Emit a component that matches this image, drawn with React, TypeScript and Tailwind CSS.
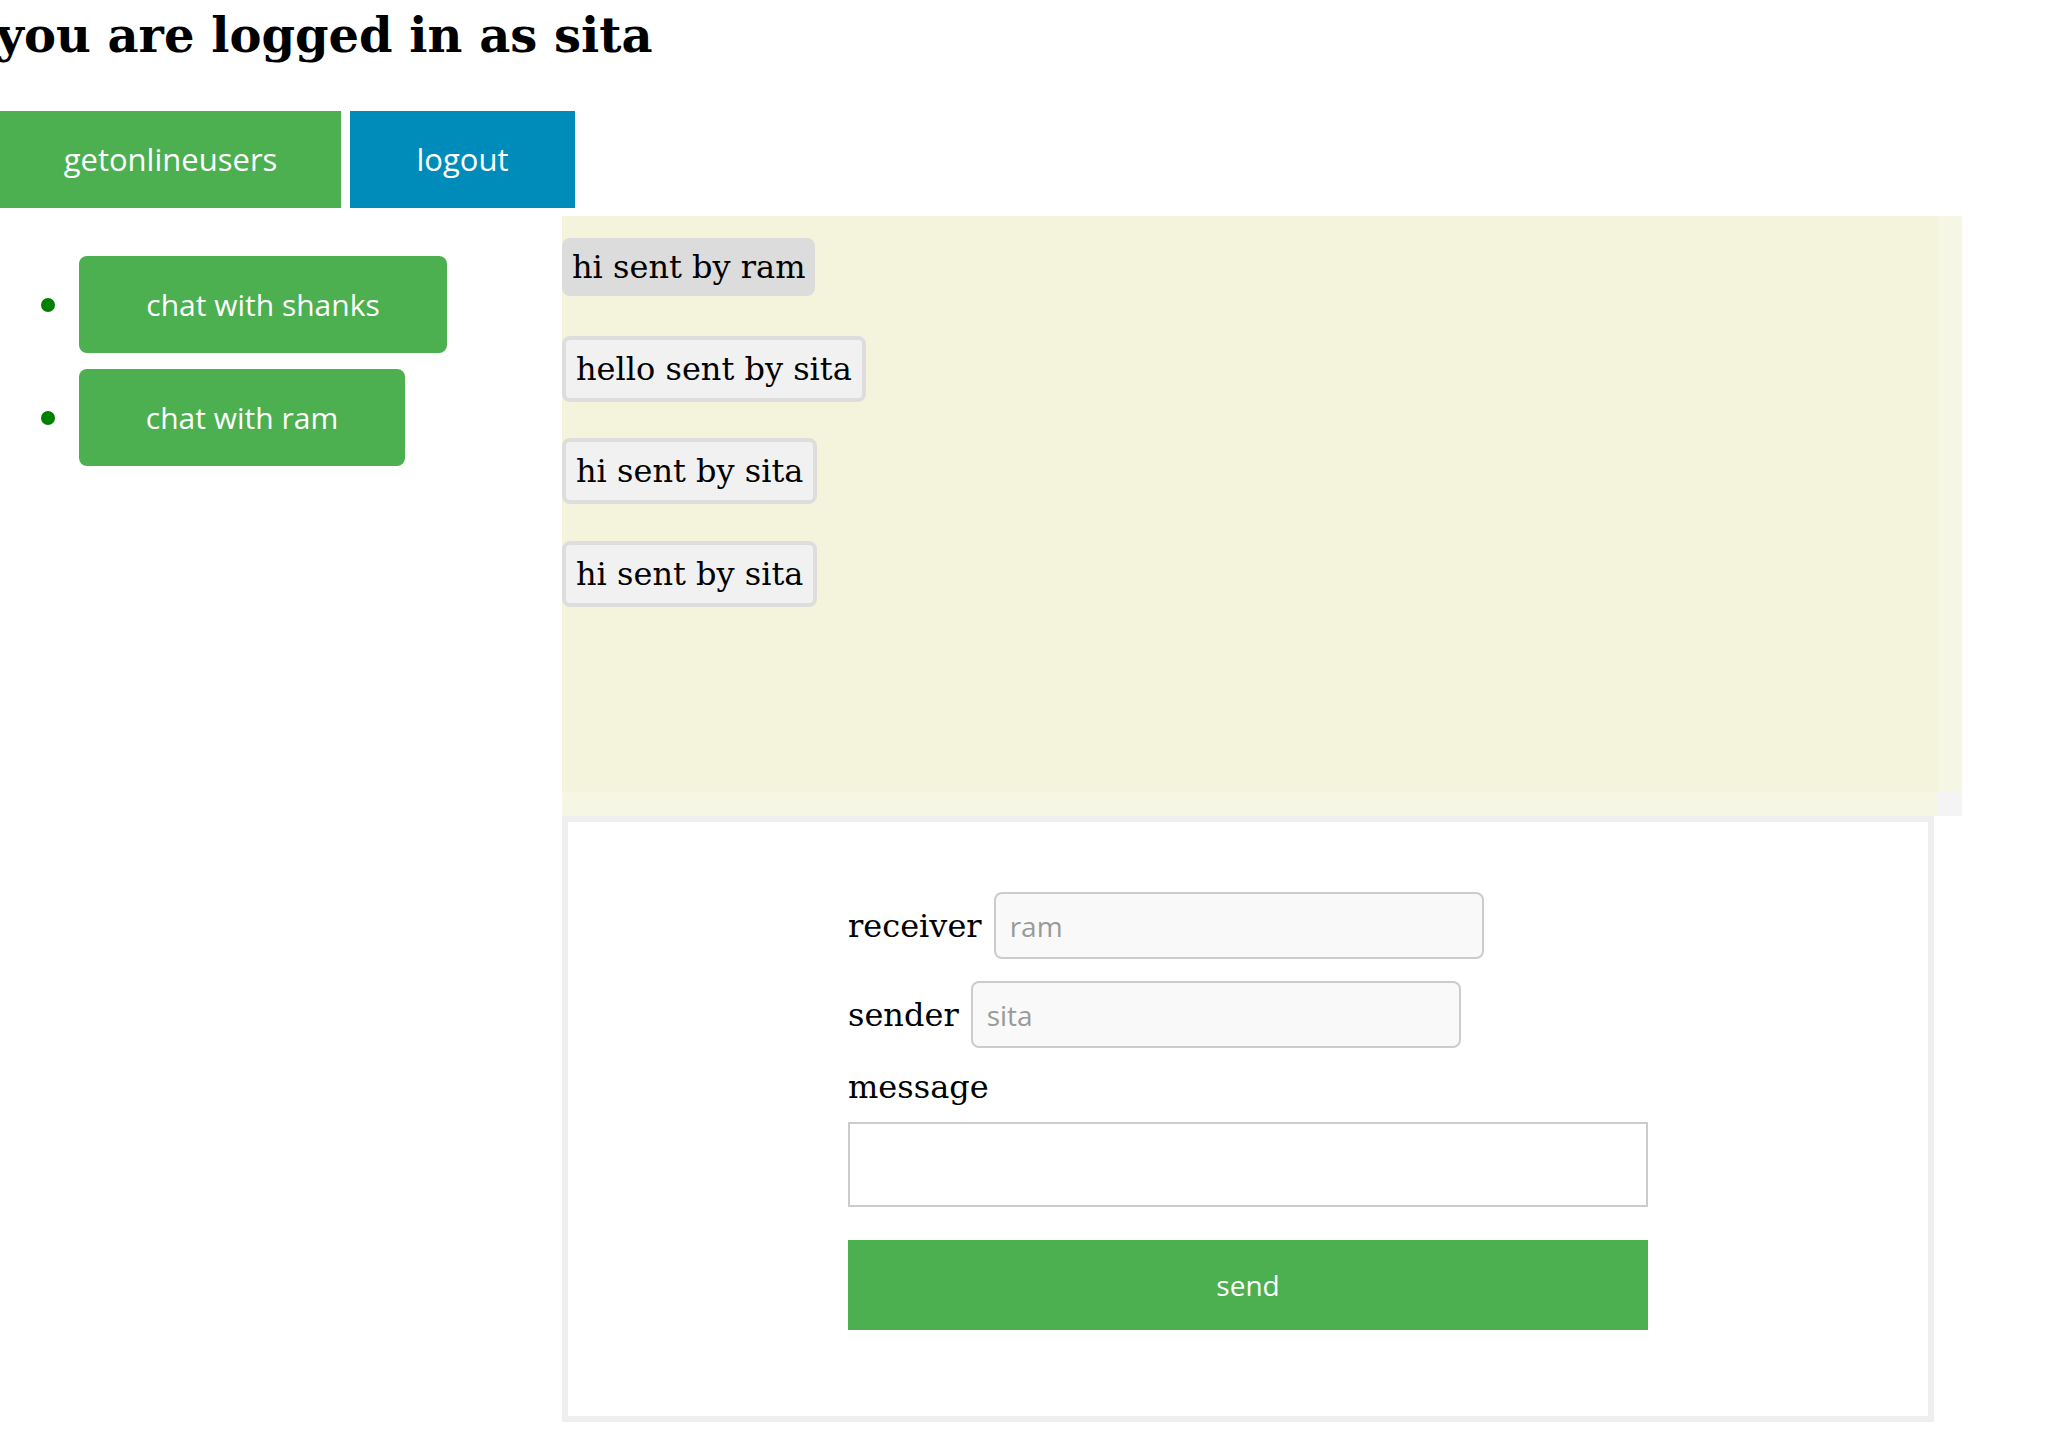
import React from 'react';

const serif = "font-['DejaVu_Serif','Liberation_Serif',serif]";
const sans = "font-['Open_Sans','Noto_Sans',sans-serif]";

const users = [
  { name: 'shanks', width: 'w-[368px]' },
  { name: 'ram', width: 'w-[326px]' },
];

export default function App() {
  return (
    <div className="min-h-screen bg-white text-black">
      {/* header */}
      <h1 className={`${serif} text-[48px] leading-[48px] font-bold pt-[11px] ml-[-4px]`}>
        you are logged in as sita
      </h1>

      <div className={`${sans} flex gap-[9px] mt-[52px] text-white text-[31px]`}>
        <button className="w-[341px] h-[97px] bg-[#4caf50]">getonlineusers</button>
        <button className="w-[225px] h-[97px] bg-[#008cba]">logout</button>
      </div>

      <div className="flex mt-[8px]">
        {/* online users */}
        <ul className="w-[562px] shrink-0 pt-[40px] flex flex-col gap-[16px]">
          {users.map((u) => (
            <li key={u.name} className="flex items-center">
              <span className="ml-[41px] w-[14px] h-[14px] rounded-full bg-[#008000]" />
              <button
                className={`${sans} ${u.width} ml-[24px] h-[97px] rounded-[8px] bg-[#4caf50] text-white text-[30px]`}
              >
                chat with {u.name}
              </button>
            </li>
          ))}
        </ul>

        <div className="flex flex-col">
          {/* chat window */}
          <div className="w-[1400px] h-[600px] flex flex-col">
            <div className="flex flex-1">
              <div className={`${serif} flex-1 bg-[#f4f4dc] text-[32px] leading-[38px] flex flex-col items-start`}>
                <div className="mt-[22px] px-[10px] py-[10px] rounded-[8px] bg-[#dcdcdc]">hi sent by ram</div>
                <div className="mt-[40px] px-[10px] py-[10px] rounded-[8px] bg-[#f1f1f1] border-[4px] border-[#dddddd]">
                  hello sent by sita
                </div>
                <div className="mt-[36px] px-[10px] py-[10px] rounded-[8px] bg-[#f1f1f1] border-[4px] border-[#dddddd]">
                  hi sent by sita
                </div>
                <div className="mt-[37px] px-[10px] py-[10px] rounded-[8px] bg-[#f1f1f1] border-[4px] border-[#dddddd]">
                  hi sent by sita
                </div>
              </div>
              <div className="w-[24px] bg-[#f6f6e4]" />
            </div>
            <div className="flex h-[24px]">
              <div className="flex-1 bg-[#f6f6e4]" />
              <div className="w-[24px] bg-[#f4f4f4]" />
            </div>
          </div>

          {/* send form */}
          <div className="w-[1372px] h-[606px] border-[6px] border-[#efefef] flex justify-center">
            <div className={`${serif} w-[800px] pt-[70px] text-[32px]`}>
              <div className="flex items-center gap-[12px]">
                <span>receiver</span>
                <input
                  placeholder="ram"
                  className={`${sans} w-[490px] h-[67px] px-[14px] text-[28px] rounded-[8px] border-2 border-[#cccccc] bg-[#f9f9f9] placeholder:text-[#9a9a9a]`}
                />
              </div>
              <div className="flex items-center gap-[12px] mt-[22px]">
                <span>sender</span>
                <input
                  placeholder="sita"
                  className={`${sans} w-[490px] h-[67px] px-[14px] text-[28px] rounded-[8px] border-2 border-[#cccccc] bg-[#f9f9f9] placeholder:text-[#9a9a9a]`}
                />
              </div>
              <div className="mt-[15px]">message</div>
              <textarea className="block mt-[11px] w-[800px] h-[85px] border-2 border-[#cccccc] bg-white resize-none" />
              <button className={`${sans} block mt-[33px] w-[800px] h-[90px] bg-[#4caf50] text-white text-[28px]`}>
                send
              </button>
            </div>
          </div>
        </div>
      </div>
    </div>
  );
}
